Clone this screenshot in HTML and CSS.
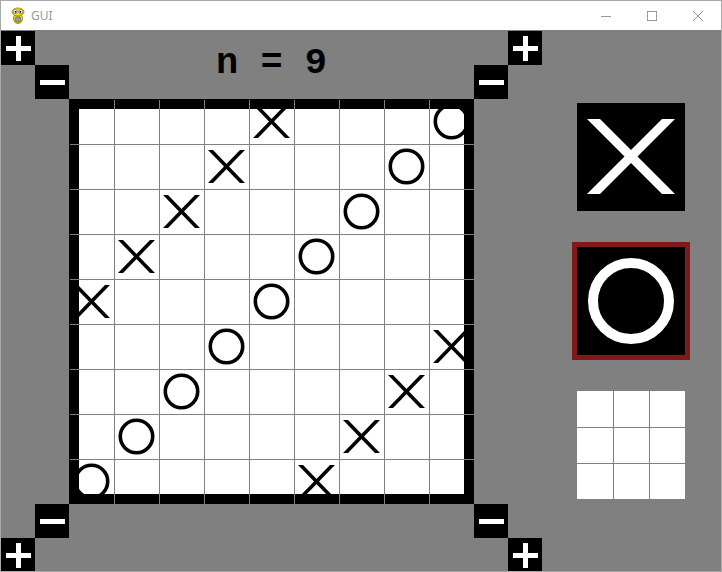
FILE: index.html
```html
<!DOCTYPE html>
<html>
<head>
<meta charset="utf-8">
<title>GUI</title>
<link rel="stylesheet" href="styles.css">
</head>
<body>
<svg class="defs" aria-hidden="true">
  <symbol id="px" viewBox="0 0 45 45">
    <polygon points="4,6 9,6 41,39 36,39" fill="#000"/>
    <polygon points="36,6 41,6 9,39 4,39" fill="#000"/>
  </symbol>
  <symbol id="po" viewBox="0 0 45 45">
    <circle cx="22.5" cy="22.5" r="16.2" fill="none" stroke="#000" stroke-width="3.6"/>
  </symbol>
  <symbol id="plus" viewBox="0 0 34 34">
    <rect x="5" y="15" width="25" height="5" fill="#fff"/>
    <rect x="15" y="5" width="5" height="25" fill="#fff"/>
  </symbol>
  <symbol id="minus" viewBox="0 0 34 34">
    <rect x="5" y="15" width="25" height="5" fill="#fff"/>
  </symbol>
</svg>
<div class="window">
  <div class="titlebar">
    <svg class="app-icon" viewBox="0 0 16 17" width="16" height="17">
      <ellipse cx="8" cy="11.5" rx="4.5" ry="5" fill="#e8d21c" stroke="#8a7a10" stroke-width="0.8"/>
      <ellipse cx="8" cy="5" rx="6" ry="4" fill="#f2dc2a" stroke="#8a7a10" stroke-width="0.8"/>
      <circle cx="5.2" cy="4.6" r="2" fill="#fff" stroke="#555" stroke-width="0.6"/>
      <circle cx="10.8" cy="4.6" r="2" fill="#fff" stroke="#555" stroke-width="0.6"/>
      <circle cx="5.6" cy="4.8" r="0.9" fill="#000"/>
      <circle cx="10.4" cy="4.8" r="0.9" fill="#000"/>
      <rect x="5.5" y="10" width="5" height="5" rx="1.5" fill="#9a9a9a" stroke="#555" stroke-width="0.6"/>
    </svg>
    <span class="win-title">GUI</span>
    <div class="controls">
      <span class="ctl"><svg viewBox="0 0 10 10" width="10" height="10"><path d="M0 5.5H10" stroke="#999" stroke-width="1"/></svg></span>
      <span class="ctl"><svg viewBox="0 0 10 10" width="10" height="10"><rect x="0.5" y="0.5" width="9" height="9" fill="none" stroke="#999" stroke-width="1"/></svg></span>
      <span class="ctl"><svg viewBox="0 0 10 10" width="10" height="10"><path d="M0 0L10 10M10 0L0 10" stroke="#999" stroke-width="1"/></svg></span>
    </div>
  </div>
  <div class="client">
    <div class="play">
      <button class="btn c1 r1"><svg viewBox="0 0 34 34"><use href="#plus"/></svg></button>
      <button class="btn c2 r2"><svg viewBox="0 0 34 34"><use href="#minus"/></svg></button>
      <div class="size-label">n = 9</div>
      <button class="btn c4 r2"><svg viewBox="0 0 34 34"><use href="#minus"/></svg></button>
      <button class="btn c5 r1"><svg viewBox="0 0 34 34"><use href="#plus"/></svg></button>
      <div class="board">
        <i></i><i></i><i></i><i></i><svg><use href="#px"/></svg><i></i><i></i><i></i><svg><use href="#po"/></svg>
        <i></i><i></i><i></i><svg><use href="#px"/></svg><i></i><i></i><i></i><svg><use href="#po"/></svg><i></i>
        <i></i><i></i><svg><use href="#px"/></svg><i></i><i></i><i></i><svg><use href="#po"/></svg><i></i><i></i>
        <i></i><svg><use href="#px"/></svg><i></i><i></i><i></i><svg><use href="#po"/></svg><i></i><i></i><i></i>
        <svg><use href="#px"/></svg><i></i><i></i><i></i><svg><use href="#po"/></svg><i></i><i></i><i></i><i></i>
        <i></i><i></i><i></i><svg><use href="#po"/></svg><i></i><i></i><i></i><i></i><svg><use href="#px"/></svg>
        <i></i><i></i><svg><use href="#po"/></svg><i></i><i></i><i></i><i></i><svg><use href="#px"/></svg><i></i>
        <i></i><svg><use href="#po"/></svg><i></i><i></i><i></i><i></i><svg><use href="#px"/></svg><i></i><i></i>
        <svg><use href="#po"/></svg><i></i><i></i><i></i><i></i><svg><use href="#px"/></svg><i></i><i></i><i></i>
      </div>
      <button class="btn c2 r4"><svg viewBox="0 0 34 34"><use href="#minus"/></svg></button>
      <button class="btn c4 r4"><svg viewBox="0 0 34 34"><use href="#minus"/></svg></button>
      <button class="btn c1 r5"><svg viewBox="0 0 34 34"><use href="#plus"/></svg></button>
      <button class="btn c5 r5"><svg viewBox="0 0 34 34"><use href="#plus"/></svg></button>
    </div>
    <div class="panel">
      <div class="tool">
        <svg viewBox="0 0 108 108" width="108" height="108">
          <polygon points="10,16 23,16 98,91 85,91" fill="#fff"/>
          <polygon points="85,16 98,16 23,91 10,91" fill="#fff"/>
        </svg>
      </div>
      <div class="tool selected">
        <svg viewBox="0 0 108 108" width="108" height="108">
          <circle cx="54" cy="54" r="38" fill="none" stroke="#fff" stroke-width="10"/>
        </svg>
      </div>
      <div class="tool empty-grid"></div>
    </div>
  </div>
</div>
</body>
</html>
```
FILE: styles.css
```css
* {
  box-sizing: border-box;
  margin: 0;
  padding: 0;
}

html, body {
  width: 722px;
  height: 572px;
  overflow: hidden;
  background: #fff;
}

body {
  font-family: "Liberation Sans", Arial, sans-serif;
}

.defs {
  position: absolute;
  width: 0;
  height: 0;
  overflow: hidden;
}

.window {
  width: 722px;
  height: 572px;
  border: 1px solid #a9a9a9;
  display: flex;
  flex-direction: column;
  background: #fff;
}

.titlebar {
  flex: none;
  height: 30px;
  display: flex;
  align-items: center;
  background: #fff;
  border-bottom: 1px solid #808080;
  padding-left: 9px;
}

.app-icon {
  flex: none;
  display: block;
}

.win-title {
  margin-left: 5px;
  font-family: "Noto Sans", "Open Sans", sans-serif;
  font-size: 12px;
  color: #999;
}

.controls {
  margin-left: auto;
  display: flex;
  height: 29px;
}

.ctl {
  width: 46px;
  height: 29px;
  display: flex;
  align-items: center;
  justify-content: center;
}

.ctl svg {
  display: block;
}

.client {
  flex: 1;
  display: flex;
  align-items: flex-start;
  background: #808080;
  overflow: hidden;
}

.play {
  flex: none;
  width: 541px;
  height: 541px;
  display: grid;
  grid-template-columns: 34px 34px 405px 34px 34px;
  grid-template-rows: 34px 34px 405px 34px 34px;
}

.btn {
  width: 34px;
  height: 34px;
  border: none;
  background: #000;
  display: block;
  cursor: pointer;
}

.btn svg {
  display: block;
  width: 34px;
  height: 34px;
}

.c1 { grid-column: 1; }
.c2 { grid-column: 2; }
.c4 { grid-column: 4; }
.c5 { grid-column: 5; }
.r1 { grid-row: 1; }
.r2 { grid-row: 2; }
.r4 { grid-row: 4; }
.r5 { grid-row: 5; }

.size-label {
  grid-column: 3;
  grid-row: 1 / span 2;
  display: flex;
  align-items: center;
  justify-content: center;
  padding-bottom: 4px;
  font-family: "Liberation Mono", "Courier New", monospace;
  font-weight: bold;
  font-size: 37px;
  color: #000;
  white-space: pre;
}

.board {
  grid-column: 3;
  grid-row: 3;
  position: relative;
  background: #fff;
  display: grid;
  grid-template-columns: repeat(9, 45px);
  grid-template-rows: repeat(9, 45px);
}

.board > i,
.board > svg {
  display: block;
  width: 45px;
  height: 45px;
}

.board::before {
  content: "";
  position: absolute;
  inset: 0;
  box-shadow: inset 0 0 0 10px #000;
}

.board::after {
  content: "";
  position: absolute;
  left: 1px;
  top: 1px;
  right: 0;
  bottom: 0;
  background-image:
    linear-gradient(to right, #808080 1px, transparent 1px),
    linear-gradient(to bottom, #808080 1px, transparent 1px);
  background-size: 45px 100%, 100% 45px;
  background-position: 44px 0, 0 44px;
  background-repeat: repeat-x, repeat-y;
}

.panel {
  flex: 1;
  align-self: stretch;
  display: flex;
  flex-direction: column;
  align-items: center;
  justify-content: center;
  gap: 36px;
  padding-right: 1px;
}

.tool {
  width: 108px;
  height: 108px;
  background: #000;
  flex: none;
}

.tool svg {
  display: block;
}

.tool.selected {
  outline: 5px solid #801a1a;
}

.tool.empty-grid {
  background-color: #fff;
  background-image:
    linear-gradient(to right, transparent 36px, #808080 36px, #808080 37px, transparent 37px, transparent 72px, #808080 72px, #808080 73px, transparent 73px),
    linear-gradient(to bottom, transparent 36px, #808080 36px, #808080 37px, transparent 37px, transparent 72px, #808080 72px, #808080 73px, transparent 73px);
}
```
